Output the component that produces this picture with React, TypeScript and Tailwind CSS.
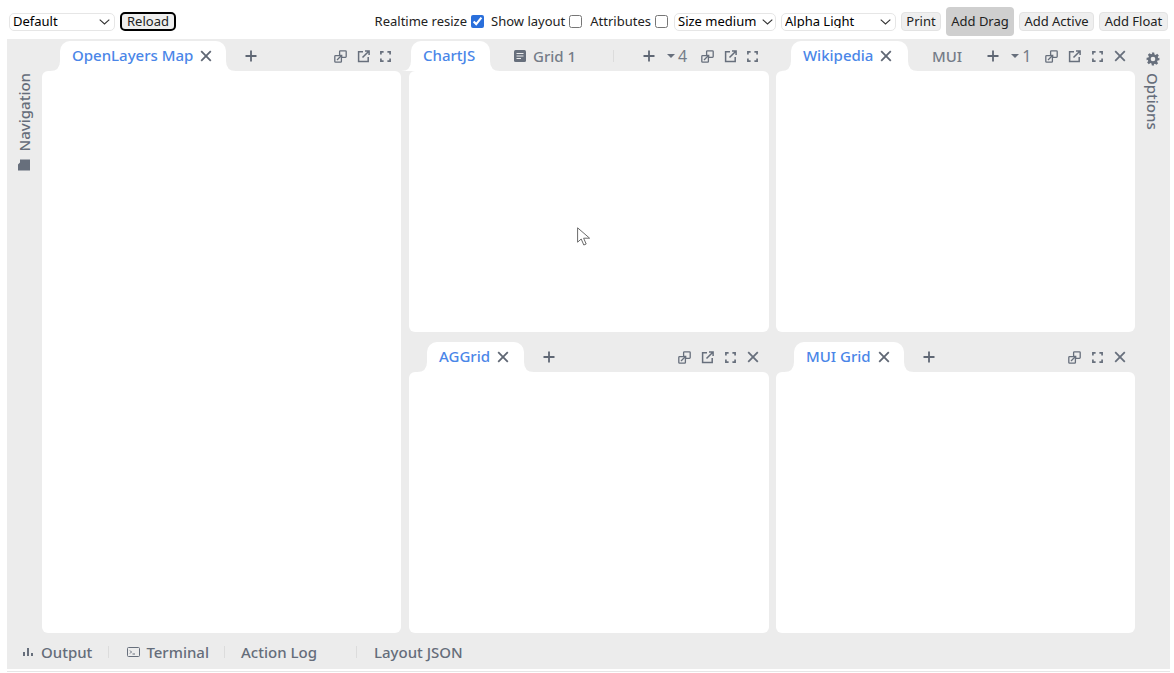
import { ReactNode } from 'react';

const FONT = "font-['Noto_Sans','Open_Sans',sans-serif]";

const PopoutIcon = () => (
  <svg width="13" height="13" viewBox="0 0 13 13" fill="none" stroke="currentColor" strokeWidth="1.3">
    <rect x="5.6" y="0.8" width="6.6" height="6.6" rx="0.8" />
    <rect x="0.8" y="5.6" width="6.6" height="6.6" rx="0.8" fill="#ececec" />
    <path d="M3 10 L7.5 5.5 M5.2 5.3 H7.7 V7.8" />
  </svg>
);

const ExternalIcon = () => (
  <svg width="13" height="13" viewBox="0 0 13 13" fill="none" stroke="currentColor" strokeWidth="1.5">
    <path d="M6 1.8 H1.6 V11.4 H11.2 V7" />
    <path d="M5.5 7.5 L11.8 1.2 M8 0.9 H12.1 V5" />
  </svg>
);

const MaxIcon = () => (
  <svg width="11" height="11" viewBox="0 0 11 11" fill="none" stroke="currentColor" strokeWidth="1.7">
    <path d="M0.9 3.6 V0.9 H3.6 M7.4 0.9 H10.1 V3.6 M10.1 7.4 V10.1 H7.4 M3.6 10.1 H0.9 V7.4" />
  </svg>
);

const CloseIcon = ({ size = 12 }: { size?: number }) => (
  <svg width={size} height={size} viewBox="0 0 12 12" fill="none" stroke="currentColor" strokeWidth="1.8">
    <path d="M1.2 1.2 L10.8 10.8 M10.8 1.2 L1.2 10.8" />
  </svg>
);

const PlusIcon = () => (
  <svg width="12" height="12" viewBox="0 0 12 12" fill="none" stroke="currentColor" strokeWidth="1.8">
    <path d="M6 0.5 V11.5 M0.5 6 H11.5" />
  </svg>
);

const IconBox = ({ children }: { children: ReactNode }) => (
  <span className="flex w-[22.6px] justify-center text-[#676f7c]">{children}</span>
);

const Flare = ({ side }: { side: 'left' | 'right' }) => (
  <svg
    width="10"
    height="10"
    viewBox="0 0 10 10"
    className={`absolute bottom-0 ${side === 'left' ? 'left-[-10px]' : 'right-[-10px]'}`}
  >
    <path d={side === 'left' ? 'M10 0 V10 H0 Q10 10 10 0 Z' : 'M0 0 V10 H10 Q0 10 0 0 Z'} fill="#ffffff" />
  </svg>
);

const ActiveTab = ({ label, closable = true, width }: { label: string; closable?: boolean; width: string }) => (
  <div className={`relative flex h-[30px] items-center rounded-t-[10px] bg-white pl-3 ${width}`}>
    <Flare side="left" />
    <Flare side="right" />
    <span className="pb-[1px] text-[15px] font-medium leading-none text-[#4a86e8]">{label}</span>
    {closable && (
      <span className="ml-[7px] text-[#5f6774]">
        <CloseIcon />
      </span>
    )}
  </div>
);

const Header = ({ children, pad }: { children: ReactNode; pad: string }) => (
  <div className={`flex h-[32px] items-end ${pad}`}>{children}</div>
);

const Tools = ({ children }: { children: ReactNode }) => (
  <div className="ml-auto flex h-[30px] items-center">{children}</div>
);

const Plus = ({ left }: { left: string }) => (
  <span className={`flex h-[30px] items-center text-[#5f6774] ${left}`}>
    <PlusIcon />
  </span>
);

const Overflow = ({ count, left }: { count: number; left: string }) => (
  <span className={`flex h-[30px] items-center text-[16px] text-[#757c88] ${left}`}>
    <span className="mr-[3px] h-0 w-0 border-x-[4.5px] border-t-[4.5px] border-x-transparent border-t-[#676f7c]" />
    {count}
  </span>
);

const Content = ({ className = '' }: { className?: string }) => (
  <div className={`rounded-[6px] bg-white ${className}`} />
);

const TopButton = ({ label, className = '' }: { label: string; className?: string }) => (
  <button className={`h-[19px] rounded-[4px] border border-[#e3e3e3] bg-[#efefef] text-[13px] leading-none text-[#222] ${className}`}>
    {label}
  </button>
);

const TopSelect = ({ options, className, arrow }: { options: string[]; className: string; arrow: string }) => (
  <span className={`relative block h-[18px] ${className}`}>
    <select className="block h-full w-full appearance-none rounded-[5px] border border-[#e6e6e6] bg-white pl-[3px] text-[13px] leading-none text-black">
      {options.map((o) => (
        <option key={o}>{o}</option>
      ))}
    </select>
    <svg width="11" height="6" viewBox="0 0 11 6" fill="none" stroke="#333" strokeWidth="1.1" className={`pointer-events-none absolute top-[6px] ${arrow}`}>
      <path d="M0.7 0.7 L5.5 5 L10.3 0.7" />
    </svg>
  </span>
);

const Check = ({ label, checked, className }: { label: string; checked?: boolean; className: string }) => (
  <label className={`flex items-center text-[13px] text-[#222] ${className}`}>
    {label}
    <input type="checkbox" defaultChecked={checked} className="ml-[4px] h-[13px] w-[13px] accent-[#2a6fdb]" />
  </label>
);

const BottomTab = ({ icon, label, left }: { icon?: ReactNode; label: string; left: string }) => (
  <div className={`flex items-center text-[15px] font-medium text-[#656d7a] ${left}`}>
    {icon}
    {label}
  </div>
);

const Sep = ({ left }: { left: string }) => <span className={`h-[12px] w-px bg-[#dcdcdc] ${left}`} />;

export default function App() {
  return (
    <div className={`relative flex h-screen w-full flex-col overflow-hidden bg-white ${FONT}`}>
      {/* top toolbar */}
      <div className="flex h-[39px] shrink-0 items-center pl-[9px] pr-[6px] pt-[4px]">
        <TopSelect options={['Default']} className="w-[106px]" arrow="right-[5px]" />
        <button className="ml-[5px] h-[19px] w-[56px] rounded-[5px] border-2 border-black bg-[#efefef] text-[13px] leading-none text-[#222]">
          Reload
        </button>
        <div className="ml-auto flex items-center">
          <Check label="Realtime resize" checked className="" />
          <Check label="Show layout" className="ml-[7px]" />
          <Check label="Attributes" className="ml-[8px]" />
          <TopSelect options={['Size medium']} className="ml-[6px] w-[102px]" arrow="right-[3px]" />
          <TopSelect options={['Alpha Light']} className="ml-[5px] w-[115px]" arrow="right-[5px]" />
          <TopButton label="Print" className="ml-[5px] w-[40px]" />
          <button className="ml-[5px] h-[29px] w-[68px] rounded-[4px] bg-[#cfcfcf] text-[13px] leading-none text-[#222]">
            Add Drag
          </button>
          <TopButton label="Add Active" className="ml-[5px] w-[75px]" />
          <TopButton label="Add Float" className="ml-[5px] w-[69px]" />
        </div>
      </div>

      {/* dock */}
      <div className="ml-[7px] mr-[4px] flex h-[630px] shrink-0 flex-col bg-[#ececec]">
        <div className="flex min-h-0 flex-1">
          <div className="flex w-[35px] shrink-0 justify-center pt-[34px]">
            <div className="flex h-fit rotate-180 items-center text-[15px] font-medium text-[#656d7a] [writing-mode:vertical-rl]">
              <svg width="13" height="15" viewBox="0 0 13 15" className="mb-[6px] rotate-90" fill="#676f7c">
                <path d="M1 1.5 H7 L9 3.5 H12 V13.5 H1 Z" />
              </svg>
              <span>Navigation</span>
            </div>
          </div>

          <div className="flex w-[359px] shrink-0 flex-col">
            <Header pad="pl-[18px] pr-[4px]">
              <ActiveTab label="OpenLayers Map" width="w-[166px]" />
              <Plus left="ml-[19px]" />
              <Tools>
                <IconBox><PopoutIcon /></IconBox>
                <IconBox><ExternalIcon /></IconBox>
                <IconBox><MaxIcon /></IconBox>
              </Tools>
            </Header>
            <Content className="flex-1" />
          </div>

          <div className="ml-[8px] flex w-[360px] shrink-0 flex-col">
            <Header pad="pl-[2px] pr-[5px]">
              <ActiveTab label="ChartJS" closable={false} width="w-[79px]" />
              <div className="ml-[24px] flex h-[30px] items-center text-[15px] font-medium text-[#757c88]">
                <svg width="12" height="12" viewBox="0 0 12 12" className="mr-[7px]">
                  <rect width="12" height="12" rx="1.5" fill="#676f7c" />
                  <path d="M2.5 3.5 H9.5 M2.5 6 H9.5 M2.5 8.5 H7" stroke="#ececec" strokeWidth="1" />
                </svg>
                Grid 1
              </div>
              <span className="mb-[9px] ml-[37px] h-[12px] w-px bg-[#dcdcdc]" />
              <Plus left="ml-[29px]" />
              <Overflow count={4} left="ml-[12px]" />
              <Tools>
                <IconBox><PopoutIcon /></IconBox>
                <IconBox><ExternalIcon /></IconBox>
                <IconBox><MaxIcon /></IconBox>
              </Tools>
            </Header>
            <Content className="h-[261px]" />
            <div className="h-[8px]" />
            <Header pad="pl-[18px] pr-[5px]">
              <ActiveTab label="AGGrid" width="w-[97px]" />
              <Plus left="ml-[19px]" />
              <Tools>
                <IconBox><PopoutIcon /></IconBox>
                <IconBox><ExternalIcon /></IconBox>
                <IconBox><MaxIcon /></IconBox>
                <IconBox><CloseIcon /></IconBox>
              </Tools>
            </Header>
            <Content className="flex-1" />
          </div>

          <div className="ml-[7px] flex w-[359px] shrink-0 flex-col">
            <Header pad="pl-[15px] pr-[4px]">
              <ActiveTab label="Wikipedia" width="w-[117px]" />
              <div className="ml-[24px] flex h-[30px] items-center text-[15px] font-medium text-[#757c88]">MUI</div>
              <Plus left="ml-[25px]" />
              <Overflow count={1} left="ml-[12px]" />
              <Tools>
                <IconBox><PopoutIcon /></IconBox>
                <IconBox><ExternalIcon /></IconBox>
                <IconBox><MaxIcon /></IconBox>
                <IconBox><CloseIcon /></IconBox>
              </Tools>
            </Header>
            <Content className="h-[261px]" />
            <div className="h-[8px]" />
            <Header pad="pl-[18px] pr-[4px]">
              <ActiveTab label="MUI Grid" width="w-[110px]" />
              <Plus left="ml-[19px]" />
              <Tools>
                <IconBox><PopoutIcon /></IconBox>
                <IconBox><MaxIcon /></IconBox>
                <IconBox><CloseIcon /></IconBox>
              </Tools>
            </Header>
            <Content className="flex-1" />
          </div>

          <div className="flex w-[35px] shrink-0 justify-center pt-[13px]">
            <div className="flex h-fit items-center text-[15px] font-medium text-[#656d7a] [writing-mode:vertical-rl]">
              <svg width="14" height="14" viewBox="0 0 24 24" className="mb-[7px]" fill="#676f7c">
                <path
                  fillRule="evenodd"
                  d="M10 1h4l.6 3.2 1.9.8 2.7-1.8 2.8 2.8-1.8 2.7.8 1.9L23 10v4l-3.2.6-.8 1.9 1.8 2.7-2.8 2.8-2.7-1.8-1.9.8L14 23h-4l-.6-3.2-1.9-.8-2.7 1.8-2.8-2.8 1.8-2.7-.8-1.9L1 14v-4l3.2-.6.8-1.9-1.8-2.7 2.8-2.8 2.7 1.8 1.9-.8zM12 8a4 4 0 1 0 0 8 4 4 0 0 0 0-8z"
                />
              </svg>
              <span>Options</span>
            </div>
          </div>
        </div>

        {/* bottom border tabs */}
        <div className="flex h-[36px] shrink-0 items-center pt-[2px]">
          <BottomTab
            left="ml-[16px]"
            label="Output"
            icon={
              <svg width="11" height="10" viewBox="0 0 11 10" className="mr-[7px]" fill="#676f7c">
                <rect x="0" y="5" width="2" height="4" />
                <rect x="4" y="1" width="2" height="8" />
                <rect x="8" y="6" width="2" height="3" />
              </svg>
            }
          />
          <Sep left="ml-[16px]" />
          <BottomTab
            left="ml-[18px]"
            label="Terminal"
            icon={
              <svg width="13" height="10" viewBox="0 0 13 10" className="mr-[6px]" fill="none" stroke="#676f7c">
                <rect x="0.5" y="0.5" width="12" height="9" rx="1" />
                <path d="M3 3.5 L4.5 5 L3 6.5 M5.5 7 H8" />
              </svg>
            }
          />
          <Sep left="ml-[15px]" />
          <BottomTab left="ml-[16px]" label="Action Log" />
          <Sep left="ml-[39px]" />
          <BottomTab left="ml-[17px]" label="Layout JSON" />
        </div>
      </div>

      <div className="mt-[2px] ml-[7px] mr-[4px] h-px bg-[#e6e6e6]" />

      {/* mouse pointer in the capture */}
      <svg width="14" height="20" viewBox="0 0 14 20" className="absolute left-[577px] top-[227px]" fill="#ffffff" stroke="#6b6b6b" strokeWidth="1">
        <path d="M0.6 0.8 V15.2 L4.2 12 L6.8 18 L9.2 17 L6.6 11.2 H12.6 Z" />
      </svg>
    </div>
  );
}
